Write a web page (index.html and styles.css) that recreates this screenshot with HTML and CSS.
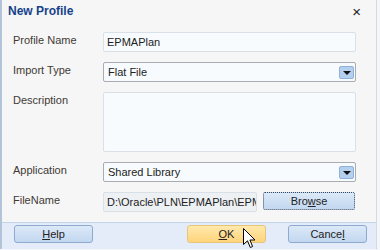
FILE: index.html
```html
<!DOCTYPE html>
<html lang="en">
<head>
    <meta charset="UTF-8">
    <title>New Profile</title>
    <link rel="stylesheet" href="styles.css">
</head>
<body>
    <div class="dialog">
        <div class="titlebar">
            <span class="title">New Profile</span>
            <span class="close">×</span>
        </div>

        <div class="form">
            <label class="label">Profile Name</label>
            <div class="input">EPMAPlan</div>

            <label class="label">Import Type</label>
            <div class="select">
                <span>Flat File</span>
                <span class="drop"><span class="arrow"></span></span>
            </div>

            <label class="label">Description</label>
            <div class="input textarea"></div>

            <label class="label">Application</label>
            <div class="select">
                <span>Shared Library</span>
                <span class="drop"><span class="arrow"></span></span>
            </div>

            <label class="label">FileName</label>
            <div class="file-row">
                <div class="input readonly">D:\Oracle\PLN\EPMAPlan\EPMA</div>
                <button class="btn browse">Bro<u>w</u>se</button>
            </div>
        </div>

        <div class="footer">
            <button class="btn"><u>H</u>elp</button>
            <div class="footer-right">
                <button class="btn ok"><u>O</u>K</button>
                <button class="btn">Cance<u>l</u></button>
            </div>
        </div>

        <!-- mouse pointer over OK -->
        <svg class="cursor" width="14" height="22" viewBox="0 0 14 22">
            <path d="M0.5 0.5 L0.5 16.5 L4.5 12.8 L7.3 19.5 L9.6 18.5 L6.9 12 L12 12 Z" fill="#fff" stroke="#000" stroke-width="1"/>
        </svg>
    </div>
</body>
</html>
```

FILE: styles.css
```css
body {
    margin: 0;
    background: #f4f6f9;
    font-family: 'Liberation Sans', Arial, sans-serif;
    font-size: 11px;
    color: #333;
}

.dialog {
    position: relative;
    box-sizing: border-box;
    width: 377px;
    height: 249px;
    background: #f6f6f6;
    border-left: 2px solid #b4c4d8;
    border-right: 1px solid #d6dbe1;
    border-bottom: 1px solid #b9cbe0;
}

.titlebar {
    height: 22px;
    display: flex;
    align-items: center;
    justify-content: space-between;
    padding: 0 15px 0 6px;
}

.title {
    font-size: 12px;
    font-weight: bold;
    color: #15428b;
}

.close {
    font-size: 15px;
    color: #222;
}

.form {
    display: grid;
    grid-template-columns: 90px 253px;
    row-gap: 10px;
    padding: 10px 0 0 11px;
}

.label {
    line-height: 14px;
    padding-top: 1px;
    color: #413a35;
}

.input {
    box-sizing: border-box;
    height: 20px;
    line-height: 18px;
    padding: 0 3px;
    background: #f8fbfd;
    border: 1px solid #d9e0e8;
    border-radius: 2px;
    color: #222;
    white-space: nowrap;
    overflow: hidden;
}

.textarea {
    height: 60px;
}

.readonly {
    background: #eef1f4;
    width: 154px;
}

.select {
    box-sizing: border-box;
    height: 20px;
    display: flex;
    align-items: center;
    justify-content: space-between;
    padding: 0 1px 0 4px;
    background: #f8fbfd;
    border: 1px solid #a9adb2;
    border-radius: 2px;
    color: #222;
}

.drop {
    width: 13px;
    height: 11px;
    display: flex;
    align-items: center;
    justify-content: center;
    background: #b5d0ee;
    border: 1px solid #8fb1d9;
    border-radius: 2px;
}

.arrow {
    width: 0;
    height: 0;
    border-left: 4px solid transparent;
    border-right: 4px solid transparent;
    border-top: 4px solid #111;
    margin-top: 1px;
}

.file-row {
    display: flex;
    align-items: flex-start;
    gap: 6px;
}

.btn {
    box-sizing: border-box;
    width: 79px;
    height: 18px;
    padding: 0;
    font-family: 'Liberation Sans', Arial, sans-serif;
    font-size: 11px;
    color: #222;
    background: linear-gradient(#dce9f8, #c2d7f0);
    border: 1px solid #8eaad0;
    border-radius: 3px;
}

.browse {
    width: 92px;
    border: 1px dotted #3a4a5e;
    border-radius: 2px;
}

.footer {
    box-sizing: border-box;
    height: 27px;
    margin-top: 10px;
    display: flex;
    justify-content: space-between;
    padding: 2px 9px 0 12px;
    background: #e3ecf8;
    border-top: 1px solid #c3d4ea;
}

.footer-right {
    display: flex;
    gap: 22px;
}

.ok {
    background: linear-gradient(#ffe9ac, #ffd47c);
    border-color: #e6c578;
}

.cursor {
    position: absolute;
    left: 241px;
    top: 228px;
}
```
